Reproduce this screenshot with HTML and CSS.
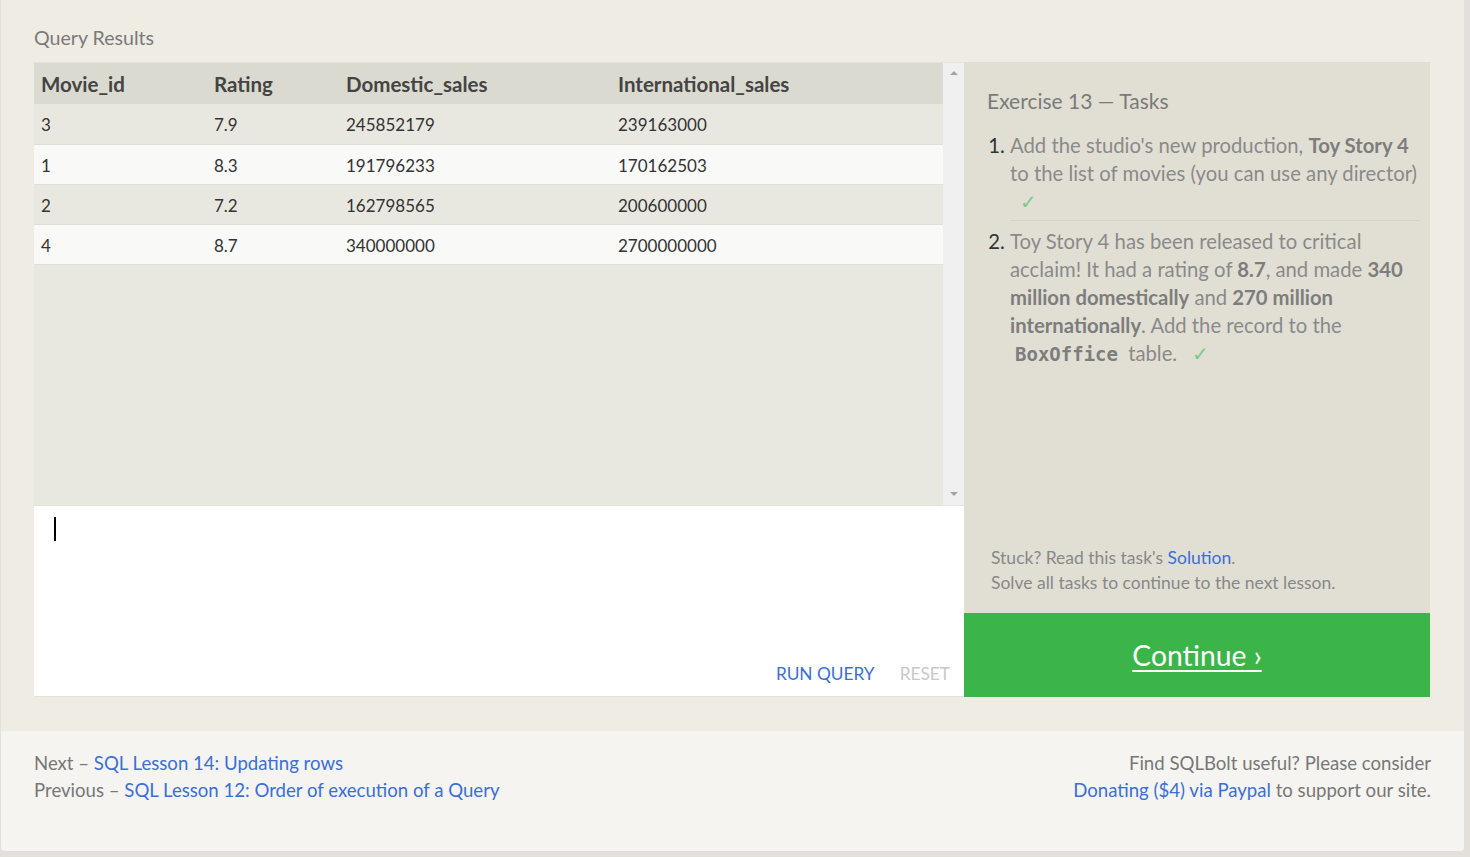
FILE: index.html
```html
<!DOCTYPE html>
<html lang="en">
<head>
<meta charset="utf-8">
<title>SQLBolt - Exercise 13</title>
<link rel="stylesheet" href="styles.css">
</head>
<body>
<div class="page">
  <div class="top">
    <div class="section-title">Query Results</div>
    <div class="workspace">
      <div class="left">
        <div class="results">
          <div class="table-area">
            <table class="results-table">
              <thead>
                <tr><th class="c1">Movie_id</th><th class="c2">Rating</th><th class="c3">Domestic_sales</th><th class="c4">International_sales</th></tr>
              </thead>
              <tbody>
                <tr><td>3</td><td>7.9</td><td>245852179</td><td>239163000</td></tr>
                <tr><td>1</td><td>8.3</td><td>191796233</td><td>170162503</td></tr>
                <tr><td>2</td><td>7.2</td><td>162798565</td><td>200600000</td></tr>
                <tr><td>4</td><td>8.7</td><td>340000000</td><td>2700000000</td></tr>
              </tbody>
            </table>
          </div>
          <div class="scrollbar">
            <span class="arrow up"></span>
            <span class="arrow down"></span>
          </div>
        </div>
        <div class="editor">
          <div class="caret-line"><span class="caret"></span></div>
          <div class="editor-actions">
            <a class="run" href="#">RUN QUERY</a>
            <span class="reset">RESET</span>
          </div>
        </div>
      </div>
      <div class="right">
        <div class="tasks">
          <div class="tasks-main">
            <div class="tasks-title">Exercise 13 — Tasks</div>
            <ol class="task-list">
              <li>Add the studio's new production, <b>Toy Story 4</b> to the list of movies (you can use any director) <span class="check">✓</span></li>
              <li>Toy Story 4 has been released to critical acclaim! It had a rating of <b>8.7</b>, and made <b>340 million domestically</b> and <b>270 million internationally</b>. Add the record to the <code>BoxOffice</code> table. <span class="check">✓</span></li>
            </ol>
          </div>
          <div class="stuck">
            <div>Stuck? Read this task's <a href="#">Solution</a>.</div>
            <div>Solve all tasks to continue to the next lesson.</div>
          </div>
        </div>
        <a class="continue" href="#">Continue ›</a>
      </div>
    </div>
  </div>
  <div class="footer">
    <div class="nav-links">
      <div>Next – <a href="#">SQL Lesson 14: Updating rows</a></div>
      <div>Previous – <a href="#">SQL Lesson 12: Order of execution of a Query</a></div>
    </div>
    <div class="donate">
      <div>Find SQLBolt useful? Please consider</div>
      <div><a href="#">Donating ($4) via Paypal</a> to support our site.</div>
    </div>
  </div>
</div>
</body>
</html>
```
FILE: styles.css
```css
* { box-sizing: border-box; }

html, body {
  margin: 0;
  padding: 0;
}

body {
  background: #e3e0db;
  font-family: Lato, "Open Sans", "Liberation Sans", sans-serif;
  color: #777;
  height: 857px;
  overflow: hidden;
  padding-left: 1px;
}

a { color: #3a6fd6; text-decoration: none; }

.page {
  width: 1463px;
  border-radius: 0 0 4px 4px;
  overflow: hidden;
}

.top {
  background: #efece4;
  padding: 25px 34px 34px 33px;
}

.section-title {
  font-size: 19.6px;
  line-height: 26px;
  color: #7a7a7a;
  margin-bottom: 11px;
}

.workspace {
  display: flex;
}

.left {
  width: 930px;
  display: flex;
  flex-direction: column;
}

.results {
  height: 443px;
  display: flex;
  background: #e9e8e0;
  border-top: 1px solid #e4e3da;
}

.table-area {
  flex: 1;
}

.results-table {
  width: 909px;
  border-collapse: collapse;
  table-layout: fixed;
}

.results-table th,
.results-table td {
  text-align: left;
  padding: 0 7px;
}

.results-table th {
  background: #dbdad0;
  height: 41px;
  font-size: 20.5px;
  font-weight: bold;
  color: #444;
}

.results-table .c1 { width: 173px; }
.results-table .c2 { width: 132px; }
.results-table .c3 { width: 272px; }
.results-table .c4 { width: 332px; }

.results-table td {
  height: 40px;
  padding-top: 2px;
  font-size: 17px;
  color: #333;
  border-bottom: 1px solid #e0dfd8;
}

.results-table tbody tr:nth-child(odd) td { background: #e9e8e0; }
.results-table tbody tr:nth-child(even) td { background: #f9f9f8; }

.scrollbar {
  width: 21px;
  background: #f0f0f0;
  display: flex;
  flex-direction: column;
  justify-content: space-between;
  align-items: center;
  padding: 8px 0 9px;
}

.arrow {
  width: 0;
  height: 0;
  border-left: 4px solid transparent;
  border-right: 4px solid transparent;
}

.arrow.up { border-bottom: 4px solid #a3a3a3; }
.arrow.down { border-top: 4px solid #a3a3a3; }

.editor {
  height: 192px;
  background: #fff;
  border-top: 1px solid #e4e3dc;
  border-bottom: 1px solid #e2e0d8;
  display: flex;
  flex-direction: column;
  justify-content: space-between;
  padding: 11px 14px 10px 20px;
}

.caret {
  display: block;
  width: 2px;
  height: 24px;
  background: #000;
}

.editor-actions {
  display: flex;
  justify-content: flex-end;
  gap: 25px;
  font-size: 17.3px;
  line-height: 24px;
}

.run { color: #3a6fd6; }
.reset { color: #c8c8c8; }

.right {
  width: 466px;
  display: flex;
  flex-direction: column;
}

.tasks {
  flex: 1;
  background: #e1dfd4;
  display: flex;
  flex-direction: column;
  justify-content: space-between;
  padding: 26px 10px 18px 25px;
}

.tasks-title {
  font-size: 21px;
  line-height: 26px;
  color: #7a7a7a;
  margin-bottom: 17px;
  margin-left: -2px;
}

.task-list {
  margin: 0;
  padding: 0 0 0 21px;
  font-size: 20.3px;
  line-height: 28px;
  color: #8a8a8a;
}

.task-list li {
  padding: 0 0 5px;
}

.task-list li + li {
  border-top: 1px solid #d6d4c9;
  padding-top: 6px;
}

.task-list li::marker {
  color: #333;
}

.task-list b {
  color: #7d7d7d;
}

.task-list code {
  font-family: "DejaVu Sans Mono", monospace;
  font-weight: bold;
  font-size: 19px;
  color: #7d7d7d;
  padding: 0 5px;
}

.check {
  color: #7ccb88;
  margin-left: 10px;
}

.stuck {
  font-size: 17.5px;
  line-height: 25px;
  color: #888;
  padding-left: 2px;
}

.continue {
  height: 84px;
  background: #3bb54a;
  color: #fff;
  font-size: 28.3px;
  text-decoration: underline;
  text-decoration-thickness: 2px;
  text-underline-offset: 4px;
  display: flex;
  align-items: center;
  justify-content: center;
}

.footer {
  background: #f5f4f0;
  height: 120px;
  display: flex;
  justify-content: space-between;
  padding: 19px 33px 0 33px;
  font-size: 18.6px;
  line-height: 27px;
  color: #777;
}

.donate {
  text-align: right;
}
```
